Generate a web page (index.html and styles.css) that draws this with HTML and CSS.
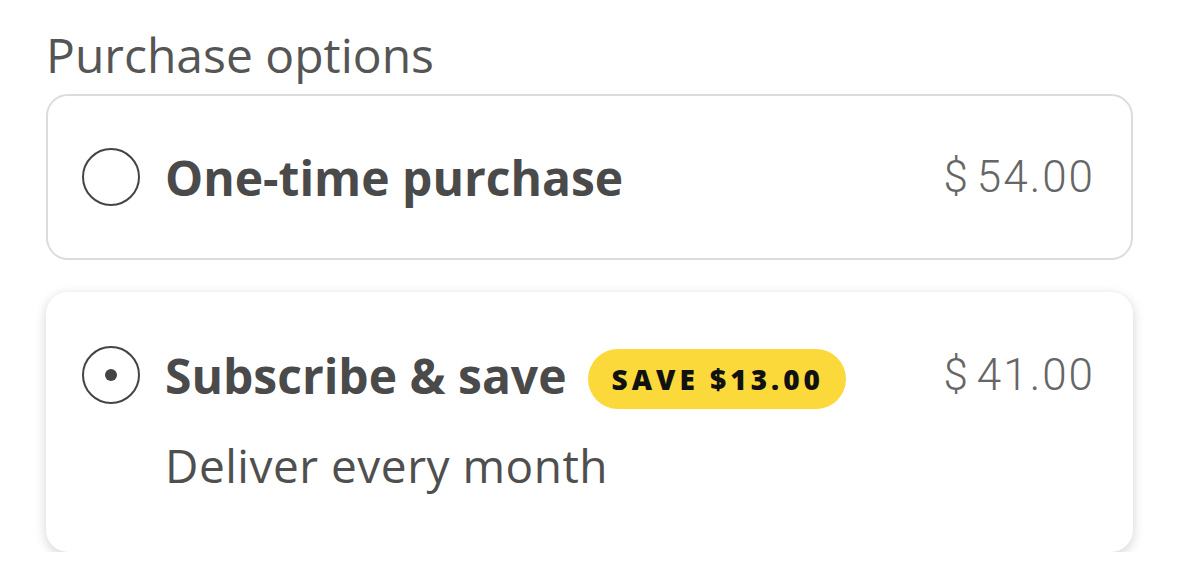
FILE: index.html
```html
<!DOCTYPE html>
<html lang="en">
<head>
<meta charset="utf-8">
<title>Purchase options</title>
<link rel="stylesheet" href="styles.css">
</head>
<body>
<div class="panel">
  <h2 class="title">Purchase options</h2>
  <div class="option option-plain">
    <div class="row">
      <span class="radio"></span>
      <span class="label">One-time purchase</span>
      <span class="price"><span class="cur">$</span>54.00</span>
    </div>
  </div>
  <div class="option option-selected">
    <div class="row row-tall">
      <span class="radio radio-on"><span class="dot"></span></span>
      <span class="label">Subscribe &amp; save</span>
      <span class="badge">SAVE $13.00</span>
      <span class="price"><span class="cur">$</span>41.00</span>
    </div>
    <div class="sub">Deliver every month</div>
  </div>
</div>
</body>
</html>
```

FILE: styles.css
```css
html, body {
  margin: 0;
  padding: 0;
  background: #ffffff;
}

.panel {
  padding: 27px 46px 0 46px;
  font-family: "Open Sans", "Noto Sans", sans-serif;
  color: #4a4a4a;
}

.title {
  margin: 0 0 12px 0;
  font-size: 48px;
  line-height: 55px;
  font-weight: 400;
  color: #555555;
}

.option {
  box-sizing: border-box;
  border-radius: 22px;
  background: #ffffff;
}

.option-plain {
  height: 166px;
  border: 2px solid #dcdcdc;
  padding: 0 38px 0 34px;
  display: flex;
  align-items: center;
}

.option-selected {
  margin-top: 32px;
  padding: 53px 40px 57px 36px;
  box-shadow: 0 3px 12px rgba(0, 0, 0, 0.18);
}

.row {
  display: flex;
  align-items: center;
  width: 100%;
}

.row-tall {
  height: 60px;
}

.radio {
  box-sizing: border-box;
  width: 58px;
  height: 58px;
  border: 2.6px solid #444444;
  border-radius: 50%;
  flex: none;
  display: flex;
  align-items: center;
  justify-content: center;
}

.dot {
  width: 12px;
  height: 12px;
  border-radius: 50%;
  background: #444444;
}

.label {
  margin-left: 25px;
  font-size: 48px;
  font-weight: 700;
  color: #4a4a4a;
  white-space: nowrap;
}

.badge {
  margin-left: 21px;
  margin-top: 7px;
  height: 60px;
  padding: 0 22px 0 24px;
  border-radius: 30px;
  background: #fcd93b;
  color: #111111;
  font-size: 28px;
  font-weight: 800;
  letter-spacing: 4px;
  display: flex;
  align-items: center;
  white-space: nowrap;
}

.price {
  margin-left: auto;
  margin-right: -2px;
  font-family: Roboto, "Liberation Sans", sans-serif;
  font-size: 44px;
  font-weight: 300;
  letter-spacing: 2px;
  color: #666666;
}

.cur {
  margin-right: 7px;
}

.sub {
  margin: 30px 0 0 83px;
  font-size: 46px;
  line-height: 60px;
  letter-spacing: 0.5px;
  color: #4f4f4f;
}
```
